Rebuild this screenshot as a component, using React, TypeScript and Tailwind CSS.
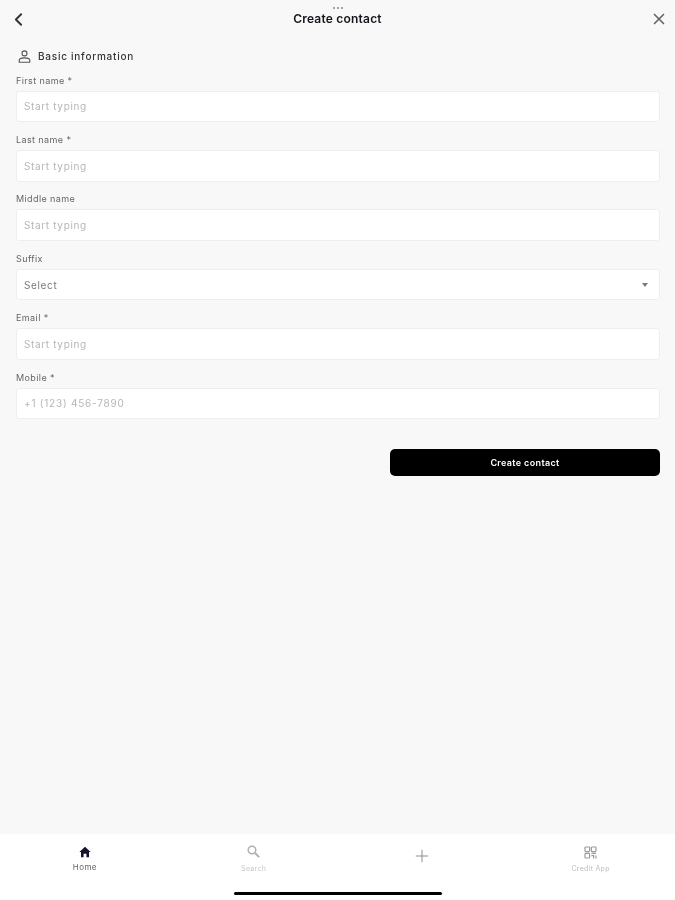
import { ChevronLeft, X, Plus } from "lucide-react";

const FIELDS = [
  { label: "First name *", placeholder: "Start typing" },
  { label: "Last name *", placeholder: "Start typing" },
  { label: "Middle name", placeholder: "Start typing" },
  { label: "Suffix", placeholder: "Select", select: true },
  { label: "Email *", placeholder: "Start typing" },
  { label: "Mobile *", placeholder: "+1 (123) 456-7890", phone: true },
];

function Field({ label, placeholder, select, phone }: { label: string; placeholder: string; select?: boolean; phone?: boolean }) {
  return (
    <div className="flex flex-col">
      <div className="h-[17px] text-[9px] leading-[14px] tracking-[0.4px] text-[#666666]">{label}</div>
      <div className="h-[31.5px] bg-white border border-[#eeeeee] rounded-[3px] pl-[7px] pr-2 pt-px flex items-center justify-between">
        <span className={`text-[10px] ${phone ? "tracking-[0.78px]" : "tracking-[0.65px]"} ${select ? "text-[#77797c]" : "text-[#b5b6b8]"}`}>{placeholder}</span>
        {select && <span className="w-0 h-0 mr-[3px] border-x-[3px] border-x-transparent border-t-[4px] border-t-[#77797c]" />}
      </div>
    </div>
  );
}

function PersonIcon() {
  return (
    <svg width="13" height="13" viewBox="0 0 13 13" fill="none" stroke="#555555" strokeWidth="1.1">
      <circle cx="6.5" cy="3.4" r="2.5" />
      <path d="M1.2 10.4c0-1.6 2.6-2.5 5.3-2.5s5.3.9 5.3 2.5v1.8H1.2z" strokeLinejoin="round" />
    </svg>
  );
}

function HomeIcon() {
  return (
    <svg width="12" height="12" viewBox="0 0 12 12" fill="#14142e">
      <path d="M6 .8 11.6 6H10v5.2H7.4V7.8H4.6v3.4H2V6H.4z" />
    </svg>
  );
}

function SearchIcon() {
  return (
    <svg width="13" height="13" viewBox="0 0 13 13" fill="none" stroke="#b0b0b0" strokeWidth="1.5">
      <circle cx="5" cy="5" r="3.8" />
      <path d="M8 8l4.2 4.2" strokeWidth="1.9" />
    </svg>
  );
}

function CreditIcon() {
  return (
    <svg width="13" height="13" viewBox="0 0 13 13" fill="none" stroke="#9a9a9a" strokeWidth="1.2">
      <rect x="1" y="1" width="4.6" height="4.6" rx="0.8" />
      <rect x="7.4" y="1" width="4.6" height="4.6" rx="0.8" />
      <rect x="1" y="7.4" width="4.6" height="4.6" rx="0.8" />
      <path d="M7.4 7.4h4.6M7.4 9.6h2.2v2.8M12 9.6v2.8" />
    </svg>
  );
}

export default function App() {
  return (
    <div className="h-[900px] w-[675px] bg-[#f8f8f8] flex flex-col font-['Inter',sans-serif] overflow-hidden blur-[0.4px]">
      {/* Header */}
      <div className="h-[38px] shrink-0 px-2 flex items-center justify-between relative">
        <div className="w-[21px]">
          <ChevronLeft size={21} strokeWidth={2.2} className="text-[#333333]" />
        </div>
        <span className="text-[12px] font-semibold tracking-[0.2px] text-[#15151c]">Create contact</span>
        <div className="w-[21px] flex justify-end">
          <X size={18} strokeWidth={2.2} className="text-[#666666] -mr-[1.5px]" />
        </div>
        <div className="absolute top-[7px] left-[333px] flex gap-[2px]">
          <span className="w-[2px] h-[2px] rounded-full bg-[#8a8a8a]" />
          <span className="w-[2px] h-[2px] rounded-full bg-[#8a8a8a]" />
          <span className="w-[2px] h-[2px] rounded-full bg-[#8a8a8a]" />
        </div>
      </div>

      {/* Form */}
      <div className="flex-1 pl-4 pr-[15px]">
        <div className="h-[34px] pl-[2px] flex items-center gap-[7px] mt-px mb-[0.7px]">
          <PersonIcon />
          <span className="text-[10px] font-medium tracking-[0.75px] text-[#333538]">Basic information</span>
        </div>
        <div className="flex flex-col gap-[10.9px]">
          {FIELDS.map((f) => (
            <Field key={f.label} {...f} />
          ))}
        </div>
        <div className="flex justify-end mt-[30px]">
          <button className="w-[270px] h-[27px] bg-black rounded-[5px] text-white text-[9px] font-semibold tracking-[0.35px]">
            Create contact
          </button>
        </div>
      </div>

      {/* Tab bar */}
      <div className="h-[66px] shrink-0 bg-white relative">
        <div className="grid grid-cols-4 pt-[11px]">
          <div className="flex flex-col items-center gap-[3px] pl-px">
            <div className="h-[13px] flex items-center"><HomeIcon /></div>
            <span className="text-[8px] tracking-[0.4px] text-[#66666a]">Home</span>
          </div>
          <div className="flex flex-col items-center gap-[6px] pl-px">
            <div className="h-[13px] flex items-center"><SearchIcon /></div>
            <span className="text-[7px] tracking-[0.3px] text-[#c8c8c8]">Search</span>
          </div>
          <div className="flex flex-col items-center pt-px">
            <Plus size={20} strokeWidth={1.2} className="text-[#8f8f8f]" />
          </div>
          <div className="flex flex-col items-center gap-[5px]">
            <div className="h-[14px] flex items-center"><CreditIcon /></div>
            <span className="text-[7px] tracking-[0.3px] text-[#bcbcbc]">Credit App</span>
          </div>
        </div>
        <div className="absolute left-[234px] top-[58px] w-[208px] h-[3px] rounded-full bg-black" />
      </div>
    </div>
  );
}
